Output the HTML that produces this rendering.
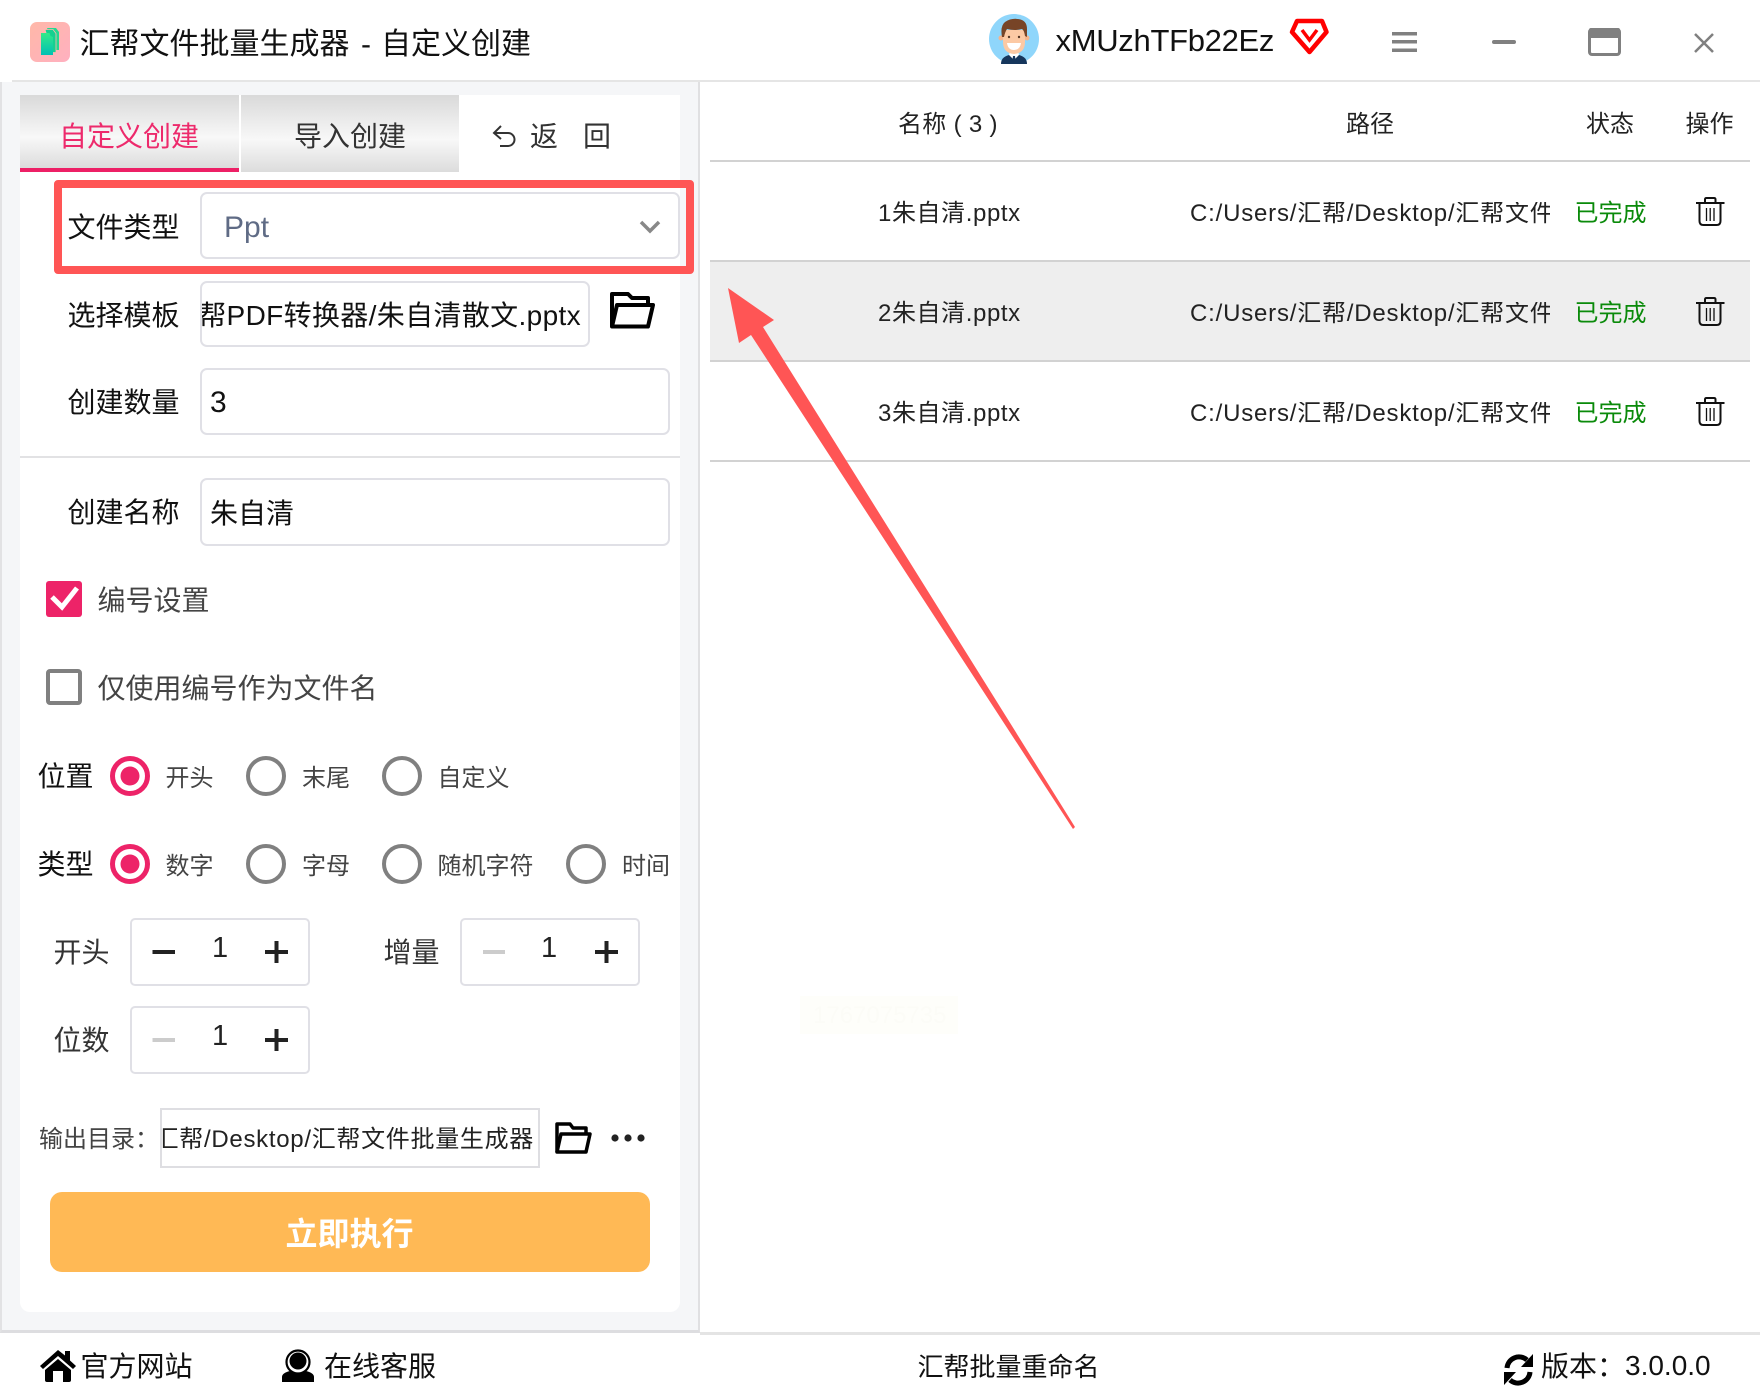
<!DOCTYPE html>
<html lang="zh-CN">
<head>
<meta charset="utf-8">
<title>汇帮文件批量生成器</title>
<style>
html,body{margin:0;padding:0;background:#fff}
#p{position:relative;width:1760px;height:1400px;overflow:hidden;background:#fff;font-family:"Liberation Sans","Noto Sans CJK SC",sans-serif;color:#222}
.t{position:absolute;white-space:nowrap;line-height:1}
.b{position:absolute;box-sizing:border-box}
.box{position:absolute;box-sizing:border-box;background:#fff;border:2px solid #e0e0e6;border-radius:7px}
.f28{font-size:28px}.f24{font-size:24px}
.lb{font-size:28px;color:#111}
.dk{color:#444}
svg{position:absolute;left:0;top:0}
.tab{position:absolute;box-sizing:border-box;top:95px;height:77px;background:linear-gradient(#d9d9d9,#f8f8f8 58%,#dcdcdc)}
</style>
</head>
<body>
<div id="p">
  <!-- top bar -->
  <div class="b" style="left:12px;top:80px;width:1748px;height:2px;background:#e5e5e5"></div>
  <div class="t" style="left:79.500px;top:30px;font-size:30px;color:#111">汇帮文件批量生成器</div>
  <div class="t" style="left:361px;top:30px;font-size:30px;color:#111">-</div>
  <div class="t" style="left:381px;top:30px;font-size:30px;color:#111">自定义创建</div>
  <div class="t" style="left:1055.500px;top:25px;font-size:31px;letter-spacing:-.3px;color:#111">xMUzhTFb22Ez</div>

  <!-- left panel -->
  <div class="b" style="left:0;top:82px;width:700px;height:1251px;background:#f5f6f8;border-left:2px solid #e2e2e4;border-right:2px solid #e0e0e2;border-bottom:3px solid #dddde0"></div>
  <div class="b" style="left:20px;top:95px;width:660px;height:1217px;background:#fff;border-radius:0 0 10px 10px"></div>

  <div class="tab" style="left:20px;width:219px;border-bottom:4px solid #ed2066"></div>
  <div class="tab" style="left:241px;width:218px"></div>
  <div class="t f28" style="left:59px;top:123px;color:#ed2a6c">自定义创建</div>
  <div class="t f28" style="left:294px;top:123px;color:#333">导入创建</div>
  <div class="t f28" style="left:530px;top:123px;color:#333">返</div>
  <div class="t f28" style="left:583px;top:123px;color:#333">回</div>

  <!-- inputs -->
  <div class="box" style="left:200px;top:192px;width:480px;height:67px"></div>
  <div class="t" style="left:224px;top:213px;font-size:30px;color:#5f6b85">Ppt</div>
  <div class="t lb" style="left:67.500px;top:214px">文件类型</div>

  <div class="t lb" style="left:67.500px;top:302px">选择模板</div>
  <div class="box" style="left:200px;top:281px;width:390px;height:66px;overflow:hidden">
    <div class="t f28" style="right:7px;top:19px;color:#111;letter-spacing:.35px">帮PDF转换器/朱自清散文.pptx</div>
  </div>

  <div class="t lb" style="left:67.500px;top:389px">创建数量</div>
  <div class="box" style="left:200px;top:368px;width:470px;height:67px"></div>
  <div class="t" style="left:210px;top:388px;font-size:30px;color:#111">3</div>

  <div class="b" style="left:20px;top:456px;width:660px;height:2px;background:#e2e2e4"></div>

  <div class="t lb" style="left:67.500px;top:499px">创建名称</div>
  <div class="box" style="left:200px;top:478px;width:470px;height:68px"></div>
  <div class="t f28" style="left:210px;top:500px;color:#111">朱自清</div>

  <div class="t f28 dk" style="left:97.500px;top:587px">编号设置</div>
  <div class="t f28 dk" style="left:97.500px;top:675px">仅使用编号作为文件名</div>

  <div class="t lb" style="left:37.500px;top:763px">位置</div>
  <div class="t f24 dk" style="left:165.500px;top:767px">开头</div>
  <div class="t f24 dk" style="left:302px;top:767px">末尾</div>
  <div class="t f24 dk" style="left:437.500px;top:767px">自定义</div>

  <div class="t lb" style="left:37.500px;top:851px">类型</div>
  <div class="t f24 dk" style="left:165.500px;top:855px">数字</div>
  <div class="t f24 dk" style="left:302px;top:855px">字母</div>
  <div class="t f24 dk" style="left:437.500px;top:855px">随机字符</div>
  <div class="t f24 dk" style="left:622px;top:855px">时间</div>

  <!-- steppers -->
  <div class="t f28" style="left:53.500px;top:939px;color:#333">开头</div>
  <div class="box" style="left:130px;top:918px;width:180px;height:68px;border-radius:5px"></div>
  <div class="t" style="left:212px;top:934px;font-size:29px;color:#222">1</div>
  <div class="t f28" style="left:383.500px;top:939px;color:#333">增量</div>
  <div class="box" style="left:460px;top:918px;width:180px;height:68px;border-radius:5px"></div>
  <div class="t" style="left:541px;top:934px;font-size:29px;color:#222">1</div>
  <div class="t f28" style="left:53.500px;top:1027px;color:#333">位数</div>
  <div class="box" style="left:130px;top:1006px;width:180px;height:68px;border-radius:5px"></div>
  <div class="t" style="left:212px;top:1022px;font-size:29px;color:#222">1</div>

  <!-- output dir -->
  <div class="t f24 dk" style="left:39px;top:1128px">输出目录：</div>
  <div class="box" style="left:160px;top:1108px;width:380px;height:60px;border-radius:0;border-color:#dedee2;overflow:hidden">
    <div class="t f24" style="right:4px;top:18px;color:#222;letter-spacing:.7px">汇帮/Desktop/汇帮文件批量生成器</div>
  </div>

  <!-- run button -->
  <div class="b" style="left:50px;top:1192px;width:600px;height:80px;border-radius:12px;background:#ffb955"></div>
  <div class="t" style="left:285.500px;top:1218px;font-size:32px;font-weight:700;color:#fff">立即执行</div>

  <!-- right table -->
  <div class="t f24" style="left:898px;top:113px;color:#222;letter-spacing:.3px">名称 ( 3 )</div>
  <div class="t f24" style="left:1346px;top:113px;color:#222">路径</div>
  <div class="t f24" style="left:1586px;top:113px;color:#222">状态</div>
  <div class="t f24" style="left:1685.500px;top:113px;color:#222">操作</div>

  <div class="b" style="left:710px;top:262px;width:1040px;height:98px;background:#eee"></div>
  <div class="b" style="left:710px;top:160px;width:1040px;height:2px;background:#d2d2d2"></div>
  <div class="b" style="left:710px;top:260px;width:1040px;height:2px;background:#d2d2d2"></div>
  <div class="b" style="left:710px;top:360px;width:1040px;height:2px;background:#d2d2d2"></div>
  <div class="b" style="left:710px;top:460px;width:1040px;height:2px;background:#d2d2d2"></div>

  <div class="t f24" style="left:878px;top:202px;letter-spacing:.6px">1朱自清.pptx</div>
  <div class="t f24" style="left:1190px;top:202px;width:360px;overflow:hidden;height:32px;letter-spacing:.8px">C:/Users/汇帮/Desktop/汇帮文件批量生成器</div>
  <div class="t f24" style="left:1574.500px;top:202px;color:#0a8a0a">已完成</div>

  <div class="t f24" style="left:878px;top:302px;letter-spacing:.6px">2朱自清.pptx</div>
  <div class="t f24" style="left:1190px;top:302px;width:360px;overflow:hidden;height:32px;letter-spacing:.8px">C:/Users/汇帮/Desktop/汇帮文件批量生成器</div>
  <div class="t f24" style="left:1574.500px;top:302px;color:#0a8a0a">已完成</div>

  <div class="t f24" style="left:878px;top:402px;letter-spacing:.6px">3朱自清.pptx</div>
  <div class="t f24" style="left:1190px;top:402px;width:360px;overflow:hidden;height:32px;letter-spacing:.8px">C:/Users/汇帮/Desktop/汇帮文件批量生成器</div>
  <div class="t f24" style="left:1574.500px;top:402px;color:#0a8a0a">已完成</div>

  <!-- faint watermark -->
  <div class="b" style="left:800px;top:996px;width:158px;height:38px;background:#fefefa"></div>
  <div class="t" style="left:813px;top:1004px;font-size:24px;color:#fcfcf7">1767075735</div>

  <!-- footer -->
  <div class="b" style="left:700px;top:1332px;width:1060px;height:3px;background:#e4e4e4"></div>
  <div class="t lb" style="left:80.500px;top:1353px">官方网站</div>
  <div class="t lb" style="left:324px;top:1353px">在线客服</div>
  <div class="t" style="left:917.500px;top:1354px;font-size:26px;color:#111">汇帮批量重命名</div>
  <div class="t lb" style="left:1541px;top:1353px">版本：</div>
  <div class="t" style="left:1625px;top:1352px;font-size:28px;color:#111">3.0.0.0</div>

  <!-- red highlight box -->
  <div class="b" style="left:54px;top:180px;width:640px;height:94px;border:8px solid #ff5555;border-radius:4px"></div>

  <svg width="1760" height="1400" viewBox="0 0 1760 1400">
    <defs>
      <linearGradient id="lg" x1="0" y1="0" x2="1" y2="1"><stop offset="0" stop-color="#ffb8a8"/><stop offset="1" stop-color="#ffb0c0"/></linearGradient>
      <linearGradient id="dg" x1="0" y1="0" x2="0" y2="1"><stop offset="0" stop-color="#34ea88"/><stop offset="1" stop-color="#00c0b4"/></linearGradient>
    </defs>

    <!-- logo -->
    <rect x="30" y="22" width="40" height="40" rx="7" fill="url(#lg)"/>
    <path d="M47 28h9l3 4v18h-3z" fill="#22d890"/>
    <path d="M45 29.500h8l3 4v19h-4z" fill="#16d090" stroke="#ffb8b0" stroke-width=".8"/>
    <path d="M41 33h8.500l1 3 2.500 1v18h-12z" fill="url(#dg)"/>

    <!-- avatar -->
    <circle cx="1014" cy="39" r="25" fill="#8fd6fb"/>
    <path d="M1001 64q0-7 8-9h10q8 2 8 9q-6 0-13 0t-13 0z" fill="#16365c"/>
    <path d="M1009 55l5 5 5-5-1-4h-8z" fill="#fff"/>
    <path d="M1013 56h2l1 8h-4z" fill="#16365c"/>
    <circle cx="1001" cy="38" r="2.500" fill="#f5b48c"/><circle cx="1027" cy="38" r="2.500" fill="#f5b48c"/>
    <path d="M1003 30h22v12q0 11-11 12q-11-1-11-12z" fill="#fcc9a4"/>
    <path d="M1002 37q-2-11 3-15q6-4 13-3q9 1 9 10v8l-2-1q-1-6-3-7q-7 2-15 0q-2 3-3 8z" fill="#774427"/>
    <path d="M1007 43h14q-1 7-7 7t-7-7z" fill="#fff"/>
    <circle cx="1009" cy="37" r="1.200" fill="#5a3a28"/><circle cx="1019" cy="37" r="1.200" fill="#5a3a28"/>

    <!-- shield -->
    <path d="M1297 21h25l4.500 11-17 20-17.500-20z" fill="#fff" stroke="#f00" stroke-width="4.500" stroke-linejoin="round"/>
    <path d="M1302 30l7.500 10 7.500-10" fill="none" stroke="#f00" stroke-width="3.500"/>

    <!-- window controls -->
    <rect x="1392" y="32" width="25" height="3.500" fill="#808080"/>
    <rect x="1392" y="40" width="25" height="3.500" fill="#808080"/>
    <rect x="1392" y="48.500" width="25" height="3.500" fill="#808080"/>
    <rect x="1492" y="40" width="24" height="4" rx="2" fill="#808080"/>
    <rect x="1589.500" y="29.500" width="30" height="25" rx="2.500" fill="#fff" stroke="#808080" stroke-width="3"/>
    <rect x="1589" y="28" width="31" height="10" rx="2" fill="#808080"/>
    <path d="M1695 34l18 18M1713 34l-18 18" stroke="#808080" stroke-width="2.500"/>

    <!-- back arrow -->
    <path d="M501 126l-7 7 7 6M494 133h14a6.500 6.500 0 0 1 0 13h-8" fill="none" stroke="#333" stroke-width="2"/>

    <!-- chevron -->
    <path d="M641 222l9 9 9-9" fill="none" stroke="#888" stroke-width="3.500"/>

    <!-- folders -->
    <g fill="none" stroke="#000" stroke-width="4" stroke-linejoin="round">
      <path d="M612 326V294h16l4 4h16v7"/>
      <path d="M612 326.500l5-21.500h36l-5 21.500z"/>
    </g>
    <g fill="none" stroke="#000" stroke-width="3.500" stroke-linejoin="round">
      <path d="M557 1152v-28h13l3 4h13v6"/>
      <path d="M557 1152l4-18h29l-4 18z"/>
    </g>
    <circle cx="615" cy="1138" r="3.600" fill="#222"/><circle cx="628" cy="1138" r="3.600" fill="#222"/><circle cx="641" cy="1138" r="3.600" fill="#222"/>

    <!-- checkboxes -->
    <rect x="46" y="581" width="36" height="36" rx="3" fill="#ed2368"/>
    <path d="M52 597l10 10 15-19" fill="none" stroke="#fff" stroke-width="5"/>
    <rect x="48" y="671" width="32" height="32" rx="2" fill="#fff" stroke="#808080" stroke-width="4"/>

    <!-- radios -->
    <g fill="none" stroke="#808080" stroke-width="4">
      <circle cx="266" cy="776" r="18"/><circle cx="402" cy="776" r="18"/>
      <circle cx="266" cy="864" r="18"/><circle cx="402" cy="864" r="18"/><circle cx="586" cy="864" r="18"/>
    </g>
    <circle cx="130" cy="776" r="17.500" fill="none" stroke="#ed2368" stroke-width="5"/><circle cx="130" cy="776" r="9.500" fill="#ed2368"/>
    <circle cx="130" cy="864" r="17.500" fill="none" stroke="#ed2368" stroke-width="5"/><circle cx="130" cy="864" r="9.500" fill="#ed2368"/>

    <!-- stepper symbols -->
    <rect x="152.500" y="950" width="22.500" height="4" fill="#222"/>
    <path d="M265 952h23M276.500 941v22" stroke="#222" stroke-width="4"/>
    <rect x="483" y="950" width="22" height="4" fill="#ccc"/>
    <path d="M595 952h23M606.500 941v22" stroke="#222" stroke-width="4"/>
    <rect x="152.500" y="1038" width="22.500" height="4" fill="#ccc"/>
    <path d="M265 1040h23M276.500 1029v22" stroke="#222" stroke-width="4"/>

    <!-- red arrow -->
    <path d="M728 288L774 320 763 327 1075 827 1073 829 751 335 739 343z" fill="#ff5555"/>

    <!-- trash icons -->
    <g fill="none" stroke="#111" stroke-width="2">
      <path d="M1696 203h28.500M1705 203v-3.500q0-1.500 1.500-1.500h7.500q1.500 0 1.500 1.500v3.500"/>
      <path d="M1699.500 203v18q0 4 4 4h13q4 0 4-4v-18"/>
      <path d="M1706.500 208v13M1710.200 208v13M1714 208v13" stroke-width="1.300"/>
    </g>
    <g transform="translate(0 100)" fill="none" stroke="#111" stroke-width="2">
      <path d="M1696 203h28.500M1705 203v-3.500q0-1.500 1.500-1.500h7.500q1.500 0 1.500 1.500v3.500"/>
      <path d="M1699.500 203v18q0 4 4 4h13q4 0 4-4v-18"/>
      <path d="M1706.500 208v13M1710.200 208v13M1714 208v13" stroke-width="1.300"/>
    </g>
    <g transform="translate(0 200)" fill="none" stroke="#111" stroke-width="2">
      <path d="M1696 203h28.500M1705 203v-3.500q0-1.500 1.500-1.500h7.500q1.500 0 1.500 1.500v3.500"/>
      <path d="M1699.500 203v18q0 4 4 4h13q4 0 4-4v-18"/>
      <path d="M1706.500 208v13M1710.200 208v13M1714 208v13" stroke-width="1.300"/>
    </g>

    <!-- footer icons -->
    <path d="M58 1350L40 1366l3 3 15-13 15 13 3-3-6-5.500V1351h-5v4.500z" fill="#000"/>
    <path d="M45 1370l13-11 13 11v10q0 2-2 2h-6v-11H53v11h-6q-2 0-2-2z" fill="#000"/>
    <circle cx="298" cy="1362" r="11.500" fill="none" stroke="#000" stroke-width="2.200"/>
    <circle cx="298" cy="1361" r="8.500" fill="#000"/>
    <path d="M282 1382v-5q0-4 8-6l8 3 8-3q8 2 8 6v5z" fill="#000"/>
    <path d="M1507 1368a12 12 0 0 1 20-8" fill="none" stroke="#000" stroke-width="5"/>
    <path d="M1533 1354v13h-12z" fill="#000"/>
    <path d="M1530 1372a12 12 0 0 1-20 8" fill="none" stroke="#000" stroke-width="5"/>
    <path d="M1504 1385v-13h12z" fill="#000"/>
  </svg>
</div>
</body>
</html>
